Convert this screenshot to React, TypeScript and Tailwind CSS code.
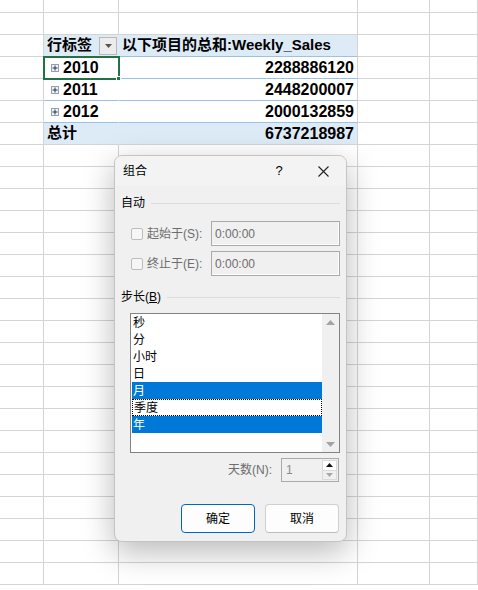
import React from "react";

const FONT = "font-['Liberation_Sans','Noto_Sans_CJK_SC',sans-serif]";

const COLS = ["w-[44px]", "w-[75px]", "w-[239px]", "w-[72px]", "flex-1"];
const ROW_COUNT = 27;

const pivotRows = [
  { label: "2010", value: "2288886120", selected: true },
  { label: "2011", value: "2448200007", selected: false },
  { label: "2012", value: "2000132859", selected: false },
];

const ExpandBox = () => (
  <span className="w-[8px] h-[8px] border border-[#8ea2bd] bg-[#eef2f8] flex items-center justify-center shrink-0">
    <svg width="6" height="6" viewBox="0 0 6 6">
      <path d="M0.5 3h5M3 0.5v5" stroke="#333" strokeWidth="1" />
    </svg>
  </span>
);

const FilterButton = () => (
  <span className="w-[18px] h-[18px] border border-[#b9b9b9] bg-[#ececec] flex items-center justify-center">
    <svg width="7" height="4" viewBox="0 0 7 4">
      <path d="M0 0h7L3.5 4z" fill="#555" />
    </svg>
  </span>
);

function PivotCell({ row, col }: { row: number; col: number }) {
  // row 2 = header, 3..5 = years, 6 = grand total
  if (row === 2) {
    if (col === 1)
      return (
        <div className="h-full flex items-center justify-between pl-[3px] pr-[1px] bg-[#ddebf7] text-[15px] font-bold">
          <span>行标签</span>
          <FilterButton />
        </div>
      );
    return (
      <div className="h-full flex items-center pl-[3px] bg-[#ddebf7] text-[15px] font-bold">
        以下项目的总和:Weekly_Sales
      </div>
    );
  }
  if (row === 6) {
    if (col === 1)
      return <div className="h-full flex items-center pl-[3px] bg-[#ddebf7] text-[15px] font-bold">总计</div>;
    return (
      <div className="h-full flex items-center justify-end pr-[3px] bg-[#ddebf7] text-[16px] font-bold">
        6737218987
      </div>
    );
  }
  const r = pivotRows[row - 3];
  if (col === 1)
    return (
      <div className="relative h-full flex items-center pl-[7px] gap-[4px] bg-white text-[16px] font-bold">
        <ExpandBox />
        <span>{r.label}</span>
        {r.selected && (
          <div className="absolute -left-[1px] -top-[1px] w-[77px] h-[24px] border-2 border-[#217346] z-10">
            <span className="absolute -right-[3px] -bottom-[3px] w-[5px] h-[5px] bg-[#217346] border border-white" />
          </div>
        )}
      </div>
    );
  return (
    <div className="h-full flex items-center justify-end pr-[3px] bg-white text-[16px] font-bold">{r.value}</div>
  );
}

function Sheet() {
  return (
    <div className="flex flex-col">
      {Array.from({ length: ROW_COUNT }).map((_, row) => {
        const inPivot = row >= 2 && row <= 6;
        return (
          <div key={row} className={`flex ${row === 0 ? "h-[13px]" : "h-[22px]"}`}>
            {COLS.map((w, col) => {
              const pivotCol = inPivot && (col === 1 || col === 2);
              let cls = `${w} shrink-0 border-b border-r border-[#d4d4d4]`;
              if (pivotCol) {
                const blueBottom = row >= 2 && row <= 5;
                cls = `${w} shrink-0 border-b border-r ${blueBottom ? "border-b-[#9bc2e6]" : "border-b-[#d4d4d4]"} ${
                  col === 1 ? (row === 2 || row === 6 ? "border-r-[#ddebf7]" : "border-r-white") : "border-r-[#d4d4d4]"
                }`;
              }
              return (
                <div key={col} className={cls}>
                  {pivotCol && <PivotCell row={row} col={col} />}
                </div>
              );
            })}
          </div>
        );
      })}
    </div>
  );
}

const CheckRow = ({ label, hotkey }: { label: string; hotkey: string }) => (
  <div className="flex items-center h-[25px]">
    <span className="ml-[10px] w-[12px] h-[12px] rounded-[2px] border border-[#bdbdbd] bg-[#f6f6f6]" />
    <span className="ml-[4px] text-[#6d6d6d] text-[12px] leading-none">
      {label}({hotkey}):
    </span>
    <div className="ml-auto w-[129px] h-[25px] border border-[#a9a9a9] bg-[#f0f0f0] shadow-[inset_-1px_-1px_0_#ffffff] flex items-center pl-[3px] text-[12px] text-[#6d6d6d]">
      0:00:00
    </div>
  </div>
);

const items = ["秒", "分", "小时", "日", "月", "季度", "年"];
const selectedItems = ["月", "年"];

function Dialog() {
  return (
    <div
      className={`absolute left-[114px] top-[155px] w-[233px] h-[387px] rounded-[8px] border border-[#c4c4c4] bg-[#f0f0f0] shadow-[0_10px_32px_rgba(0,0,0,0.28)] overflow-hidden flex flex-col text-black ${FONT}`}
    >
      {/* title bar */}
      <div className="h-[30px] bg-[#f3f3f3] flex items-center pl-[8px] pr-[1px] text-[12px]">
        <span>组合</span>
        <div className="ml-auto flex">
          <span className="w-[44px] flex items-center justify-center text-[13px]">?</span>
          <span className="w-[44px] flex items-center justify-center">
            <svg width="11" height="11" viewBox="0 0 11 11">
              <path d="M0.5 0.5l10 10M10.5 0.5l-10 10" stroke="#222" strokeWidth="1.1" />
            </svg>
          </span>
        </div>
      </div>

      <div className="flex flex-col pl-[6px] pr-[6px]">
        {/* 自动 */}
        <div className="mt-[9px] h-[16px] flex items-center text-[12px]">
          <span>自动</span>
          <span className="ml-[6px] flex-1 h-px bg-[#dcdcdc]" />
        </div>
        <div className="mt-[10px]">
          <CheckRow label="起始于" hotkey="S" />
        </div>
        <div className="mt-[5px]">
          <CheckRow label="终止于" hotkey="E" />
        </div>

        {/* 步长 */}
        <div className="mt-[13px] h-[16px] flex items-center text-[12px]">
          <span>
            步长(<span className="underline">B</span>)
          </span>
          <span className="ml-[6px] flex-1 h-px bg-[#dcdcdc]" />
        </div>

        <div className="mt-[8px] ml-[9px] h-[140px] border border-[#838383] bg-white flex">
          <div className="flex-1 flex flex-col pl-[1px] pt-0">
            {items.map((it) => {
              const sel = selectedItems.includes(it);
              const focus = it === "季度";
              return (
                <div
                  key={it}
                  className={`h-[17px] flex items-center pl-[1px] text-[12px] leading-none ${
                    sel ? "bg-[#0078d7] text-white" : "text-black"
                  } ${focus ? "border border-dotted border-black" : ""}`}
                >
                  {it}
                </div>
              );
            })}
          </div>
          <div className="w-[17px] bg-[#f0f0f0] flex flex-col items-center justify-between pt-[6px] pb-[5px]">
            <svg width="9" height="5" viewBox="0 0 9 5">
              <path d="M0 5L4.5 0L9 5z" fill="#a3a3a3" />
            </svg>
            <svg width="9" height="5" viewBox="0 0 9 5">
              <path d="M0 0h9L4.5 5z" fill="#a3a3a3" />
            </svg>
          </div>
        </div>

        {/* 天数 */}
        <div className="mt-[5px] h-[24px] flex items-center justify-end pr-[1px]">
          <span className="text-[12px] text-[#6d6d6d]">天数(N):</span>
          <div className="ml-[9px] w-[58px] h-[24px] border border-[#a9a9a9] bg-[#f0f0f0] flex">
            <span className="flex-1 flex items-center pl-[4px] text-[12px] text-[#8a8a8a]">1</span>
            <div className="w-[15px] flex flex-col mr-[1px] my-[1px]">
              <span className="flex-1 bg-white border border-[#dadada] flex items-center justify-center">
                <svg width="7" height="4" viewBox="0 0 7 4">
                  <path d="M0 4L3.5 0L7 4z" fill="#111" />
                </svg>
              </span>
              <span className="flex-1 bg-[#f0f0f0] border border-t-0 border-[#dadada] flex items-center justify-center">
                <svg width="7" height="4" viewBox="0 0 7 4">
                  <path d="M0 0h7L3.5 4z" fill="#a8a8a8" />
                </svg>
              </span>
            </div>
          </div>
        </div>

        {/* buttons */}
        <div className="mt-[22px] flex justify-end gap-[10px] pr-[1px]">
          <button className="w-[74px] h-[29px] rounded-[4px] border border-[#0067c0] bg-[#fdfdfd] text-[12px]">
            确定
          </button>
          <button className="w-[74px] h-[29px] rounded-[4px] border border-[#d0d0d0] border-b-[#bdbdbd] bg-[#fdfdfd] text-[12px]">
            取消
          </button>
        </div>
      </div>
    </div>
  );
}

export default function App() {
  return (
    <div className={`relative w-[478px] h-[590px] overflow-hidden bg-white text-black ${FONT}`}>
      <Sheet />
      <Dialog />
    </div>
  );
}
